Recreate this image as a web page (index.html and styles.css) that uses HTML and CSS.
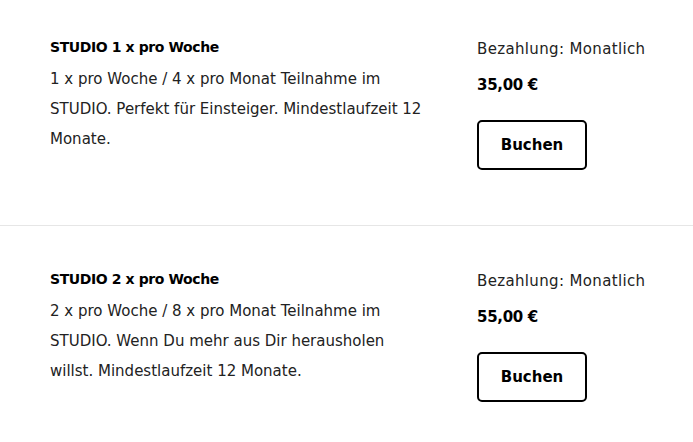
FILE: index.html
```html
<!DOCTYPE html>
<html lang="de">
<head>
<meta charset="utf-8">
<title>Tarife</title>
<link rel="stylesheet" href="styles.css">
</head>
<body>
<div class="plans">
  <section class="plan">
    <div class="info">
      <h3 class="title">STUDIO 1 x pro Woche</h3>
      <p class="desc">1 x pro Woche / 4 x pro Monat Teilnahme im STUDIO. Perfekt für Einsteiger. Mindestlaufzeit 12 Monate.</p>
    </div>
    <div class="side">
      <div class="billing">Bezahlung: Monatlich</div>
      <div class="price">35,00 €</div>
      <button class="book">Buchen</button>
    </div>
  </section>
  <section class="plan">
    <div class="info">
      <h3 class="title">STUDIO 2 x pro Woche</h3>
      <p class="desc">2 x pro Woche / 8 x pro Monat Teilnahme im STUDIO. Wenn Du mehr aus Dir herausholen willst. Mindestlaufzeit 12 Monate.</p>
    </div>
    <div class="side">
      <div class="billing">Bezahlung: Monatlich</div>
      <div class="price">55,00 €</div>
      <button class="book">Buchen</button>
    </div>
  </section>
</div>
</body>
</html>
```
FILE: styles.css
```css
html, body {
  margin: 0;
  padding: 0;
  background: #fff;
}
body {
  font-family: "DejaVu Sans", "Open Sans", sans-serif;
  color: #222;
  width: 693px;
  overflow: hidden;
}
.plan {
  display: flex;
  padding: 43px 0 55px 50px;
  border-top: 1px solid #e6e6e6;
}
.plan:first-child {
  border-top: none;
  padding-top: 37px;
}
.info {
  width: 378px;
  margin-right: 49px;
}
.title {
  margin: 0;
  font-size: 14px;
  line-height: 20px;
  font-weight: 700;
  color: #000;
  letter-spacing: -0.4px;
}
.desc {
  margin: 7px 0 0;
  font-size: 15px;
  line-height: 30px;
}
.side {
  display: flex;
  flex-direction: column;
  align-items: flex-start;
  padding-top: 1px;
}
.billing {
  font-size: 15px;
  line-height: 22px;
  letter-spacing: 0.35px;
}
.price {
  margin-top: 14px;
  font-size: 15px;
  line-height: 22px;
  font-weight: 700;
  color: #000;
  letter-spacing: -0.3px;
}
.book {
  margin-top: 24px;
  width: 110px;
  height: 50px;
  border: 2px solid #000;
  border-radius: 5px;
  background: #fff;
  font-family: inherit;
  font-size: 15px;
  font-weight: 700;
  color: #000;
  padding: 0;
}
```
